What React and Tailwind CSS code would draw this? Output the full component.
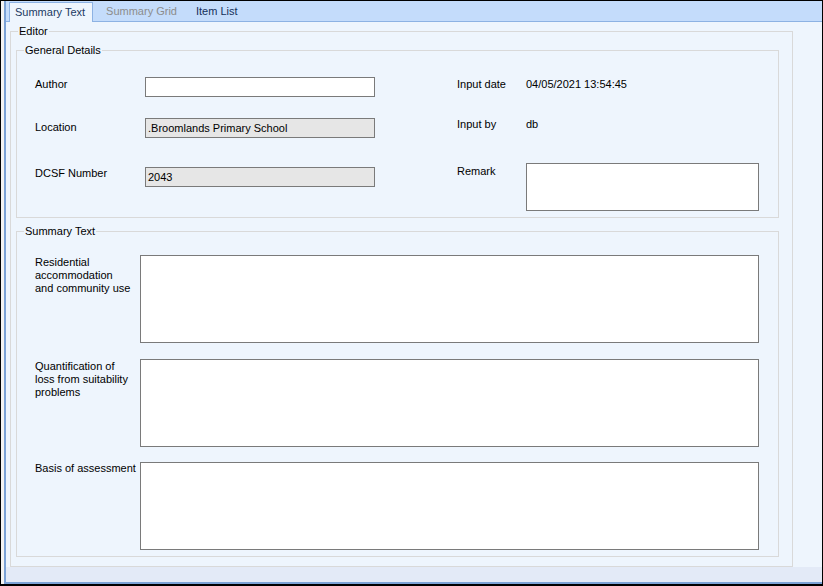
import React from 'react'

const Field = ({ value, disabled, className = '' }) => (
    <div className={`h-[20px] border border-[#7a7a7a] flex items-center pl-[2px] ${disabled ? 'bg-[#e6e6e6]' : 'bg-white'} ${className}`}>
        {value}
    </div>
);

const SummaryRow = ({ lines, className = '', labelPad = 'pt-[1px]' }) => (
    <div className={`flex items-start pl-[18px] ${className}`}>
        <div className={`w-[105px] whitespace-nowrap ${labelPad}`}>
            {lines.map((l) => (
                <div key={l}>{l}</div>
            ))}
        </div>
        <div className="w-[619px] h-[88px] border border-[#7a7a7a] bg-white"></div>
    </div>
);

const App = () => {
    return (
        <div className="w-[823px] h-[586px] border border-b-2 border-black bg-[#f3f3f3] pl-[3px] font-['Liberation_Sans',Arial,sans-serif] text-[11px] leading-[13px] text-black">
            <div className="h-full flex flex-col border-l-2 border-b-2 border-[#7ba2d6] bg-[#e3eaf7]">
                {/* tabs */}
                <div className="h-[21px] shrink-0 flex items-end pl-[3px] bg-[#c4dcfb] border-b border-[#8db2e3]">
                    <div className="h-[20px] -mb-px flex items-center pl-[5px] pr-[7px] bg-[#eef5fd] border border-b-0 border-[#8db2e3] text-[#1b3a63]">
                        Summary Text
                    </div>
                    <div className="h-[20px] flex items-center ml-[4px] px-[9px] text-[#8c8c8c]">Summary Grid</div>
                    <div className="h-[20px] flex items-center pl-[10px] text-[#15305a]">Item List</div>
                </div>

                {/* tab page */}
                <div className="h-[545px] pt-[3px] pl-[4px] bg-[#eef5fd]">
                    <fieldset className="w-[783px] h-[542px] border border-[#d9d9d9]">
                        <legend className="ml-[7px] px-[1px]">Editor</legend>

                        <fieldset className="ml-[5px] mt-[6px] w-[763px] h-[174px] border border-[#d9d9d9]">
                            <legend className="ml-[7px] px-[1px]">General Details</legend>
                            <div className="flex">
                                <div className="pl-[18px] w-[358px]">
                                    <div className="flex items-start mt-[20px]">
                                        <div className="w-[110px] pt-[1px]">Author</div>
                                        <Field className="w-[230px]" />
                                    </div>
                                    <div className="flex items-start mt-[21px]">
                                        <div className="w-[110px] pt-[3px]">Location</div>
                                        <Field className="w-[230px]" disabled value=".Broomlands Primary School" />
                                    </div>
                                    <div className="flex items-start mt-[29px]">
                                        <div className="w-[110px]">DCSF Number</div>
                                        <Field className="w-[230px]" disabled value="2043" />
                                    </div>
                                </div>
                                <div className="ml-[82px]">
                                    <div className="flex mt-[21px]">
                                        <div className="w-[69px]">Input date</div>
                                        <div>04/05/2021 13:54:45</div>
                                    </div>
                                    <div className="flex mt-[27px]">
                                        <div className="w-[69px]">Input by</div>
                                        <div>db</div>
                                    </div>
                                    <div className="flex items-start mt-[32px]">
                                        <div className="w-[69px] pt-[2px]">Remark</div>
                                        <div className="w-[233px] h-[48px] border border-[#7a7a7a] bg-white"></div>
                                    </div>
                                </div>
                            </div>
                        </fieldset>

                        <fieldset className="ml-[5px] mt-[7px] w-[763px] h-[332px] border border-[#d9d9d9]">
                            <legend className="ml-[7px] px-[1px]">Summary Text</legend>
                            <SummaryRow className="mt-[17px]" lines={['Residential', 'accommodation', 'and community use']} />
                            <SummaryRow className="mt-[16px]" lines={['Quantification of', 'loss from suitability', 'problems']} />
                            <SummaryRow className="mt-[15px]" labelPad="pt-0" lines={['Basis of assessment']} />
                        </fieldset>
                    </fieldset>
                </div>
            </div>
        </div>
    );
};

export default App
